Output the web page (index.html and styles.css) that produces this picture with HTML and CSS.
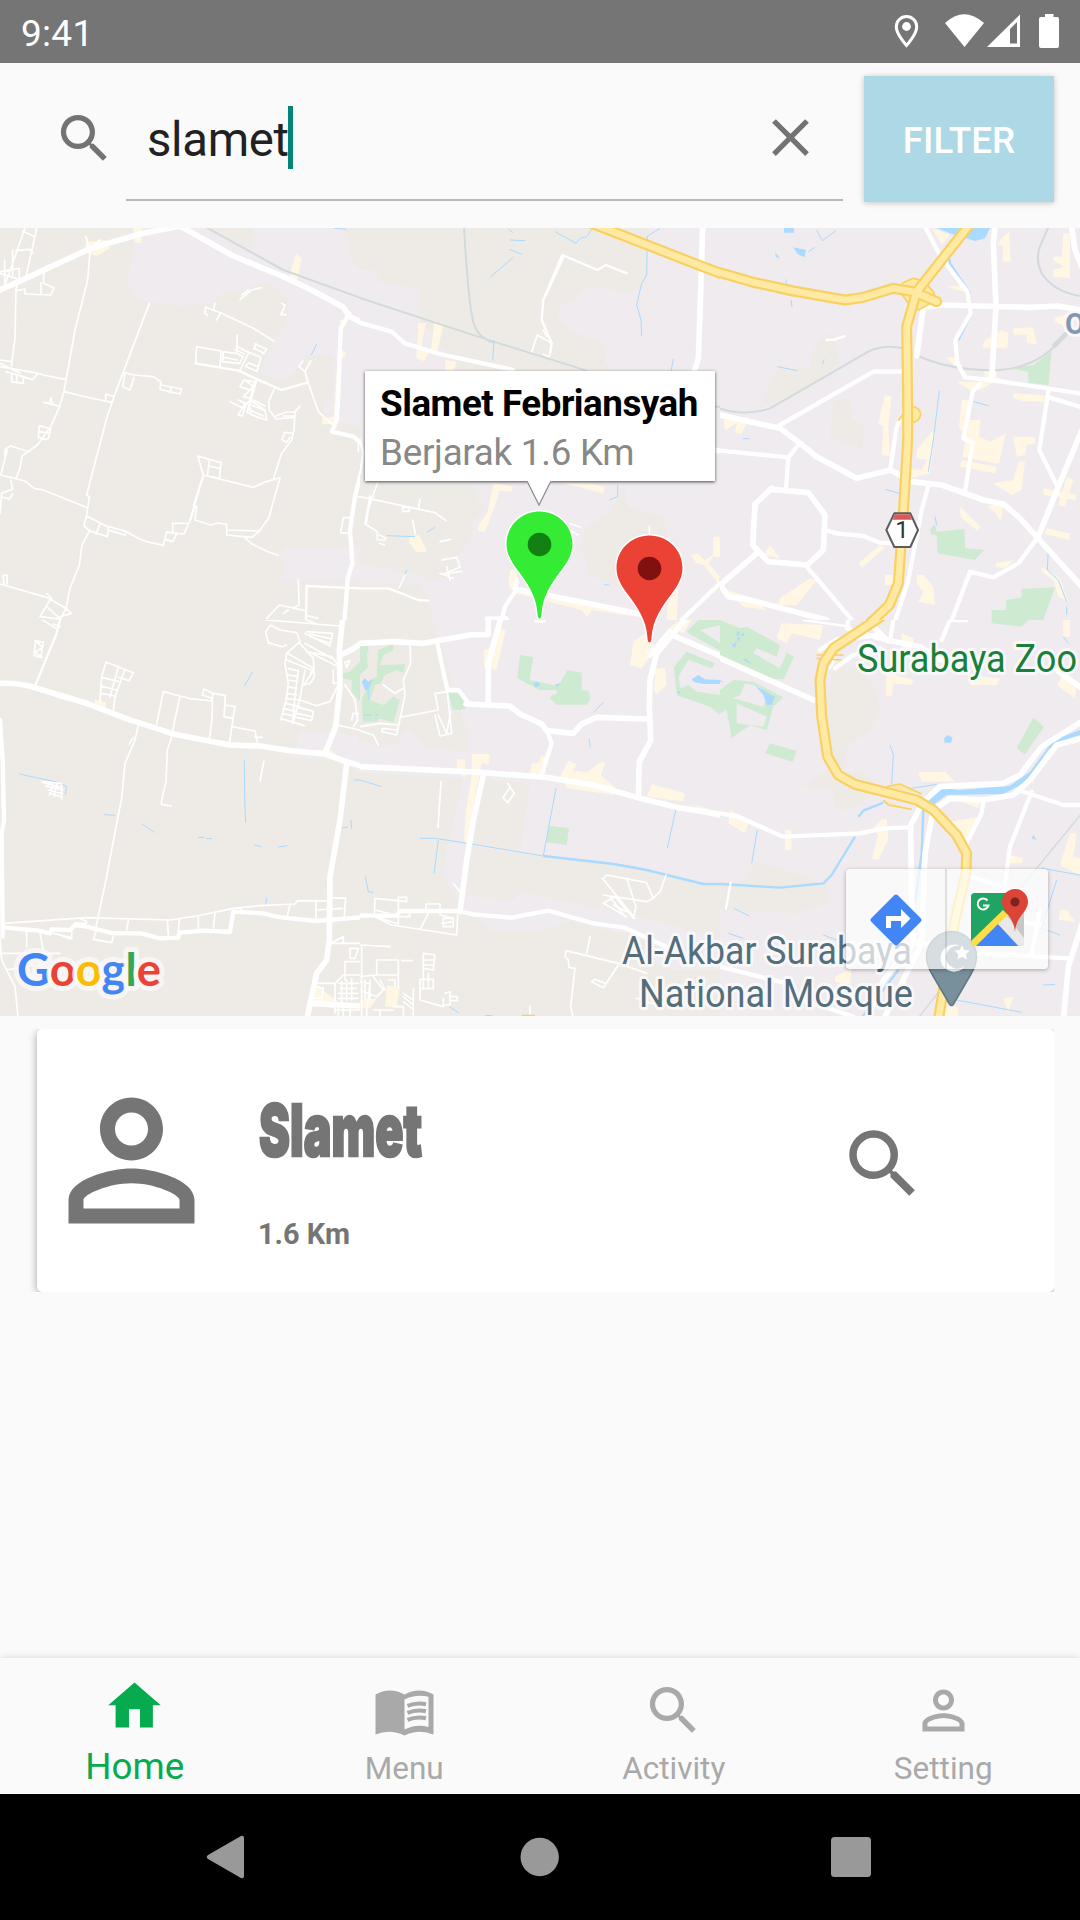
FILE: index.html
```html
<!DOCTYPE html>
<html lang="id">
<head>
<meta charset="utf-8">
<meta name="viewport" content="width=device-width">
<title>Home</title>
<link rel="stylesheet" href="styles.css">
</head>
<body>
<svg width="0" height="0" class="defs">
  <symbol id="search" viewBox="0 0 24 24"><path d="M15.5 14h-.79l-.28-.27A6.471 6.471 0 0 0 16 9.5 6.5 6.5 0 1 0 9.5 16c1.61 0 3.09-.59 4.23-1.57l.27.28v.79l5 4.99L20.490 19l-4.990-5zm-6 0C7.010 14 5 11.990 5 9.500S7.010 5 9.500 5 14 7.010 14 9.500 11.990 14 9.500 14z"/></symbol>
  <symbol id="person" viewBox="0 0 24 24"><path d="M12 5.900c1.160 0 2.100.940 2.100 2.100s-.940 2.100-2.100 2.100S9.900 9.160 9.900 8s.940-2.100 2.100-2.100m0 9c2.970 0 6.100 1.460 6.100 2.100v1.100H5.900V17c0-.640 3.130-2.100 6.100-2.100M12 4C9.790 4 8 5.790 8 8s1.790 4 4 4 4-1.790 4-4-1.790-4-4-4zm0 9c-2.670 0-8 1.340-8 4v3h16v-3c0-2.660-5.330-4-8-4z"/></symbol>
</svg>

<header class="status">
  <span class="clock">9:41</span>
  <svg class="status-icons" viewBox="890 0 190 63" width="190" height="63">
    <path d="M906.500 16.500c-5.700 0-10.200 4.500-10.200 10.200 0 7.600 10.200 18.800 10.200 18.800s10.200-11.200 10.200-18.800c0-5.700-4.500-10.200-10.200-10.200z" fill="none" stroke="#fff" stroke-width="3"/>
    <circle cx="906.500" cy="26.500" r="4.400" fill="#fff"/>
    <path d="M945 23Q964 5.500 984 23L964.500 47z" fill="#fff"/>
    <path d="M987 47L1020 14.500V47z" fill="#fff"/><path d="M1010 29l7-7v21.500h-7z" fill="#757575"/>
    <path d="M1045 14h8.500v3h3.500q2 0 2 2v27q0 2-2 2h-16q-2 0-2-2V19q0-2 2-2h4z" fill="#fff"/>
  </svg>
</header>

<section class="searchbar">
  <svg class="i-search"><use href="#search"/></svg>
  <div class="field">
    <span class="query">slamet</span><span class="caret"></span>
    <svg class="i-close" viewBox="0 0 24 24"><path d="M19 6.410L17.590 5 12 10.590 6.410 5 5 6.410 10.590 12 5 17.590 6.410 19 12 13.410 17.590 19 19 17.590 13.410 12z"/></svg>
  </div>
  <button class="filter">FILTER</button>
</section>

<main class="map">
<svg class="canvas" viewBox="0 228 1080 788" width="1080" height="788">
  <rect class="land" y="228" width="1080" height="788"/>

  <svg x="0" y="220" width="360" height="400" viewBox="0 0 1080 1200">
    <path class="urban" d="M395 0L400 80 380 190 400 230 430 243 530 256 640 250 670 215 740 210 785 185 830 205 865 245 858 300 780 455 855 490 925 405 998 405 1000 540 975 540 970 570 1010 610 1080 618V150L1050 110 1048 70 1030 20H760L752 90 600 20zM850 980H1080V1083H835L858 1045 840 1005z"/>
    <path class="shop" d="M258 66L320 60 330 85 290 108 255 95zM400 24h25v44h-20zM888 103l18 10-15 70-27-5zM1020 300l12 0-8 90 12 5-2 18-14 0-8 200h-46v-20l35-2z"/>
    <path class="rail" d="M615 20L850 150 1090 237"/>
    <path class="water" d="M950 372L934 405M1000 24L1040 28"/>
    <path class="w2" d="M75 24L15 195M110 24L78 170M68 34L104 50M48 92l40-4 10 10M0 155L58 145V178L0 160M38 90v75M14 122v70M52 185L48 210 45 355 34 440M132 160L130 190 162 203 152 225 75 222V207L50 212M123 222V188M0 420l35 5M0 430l60 30M0 440L105 458 130 465 195 478M18 455l80 24 15-18M35 460v25l35 5v-20zM50 470v18M258 50L270 95 263 180 225 330 192 514 178 562 152 620 112 675 66 708 60 745 48 775M258 95L300 60M192 514L245 528 335 547 343 530 317 522V543M132 547l48 12M148 548l5-15 5 18M152 627l-34-10-3 35 20 6 10-3 7-28zM116 635l32 5M80 693L32 678 15 688 14 708M22 690L2 765 75 783 102 805 130 810 262 863M32 780L38 808 5 820 0 880M38 822l-10 15-20-5M448 250L342 530 320 595 260 825 268 830 260 885 252 918 270 933 322 950 326 922 260 888M300 912l-12 30M270 930L246 975 238 1035 210 1105 198 1165 180 1200M326 920l54 15-5 10-45-13M380 935L420 958 440 965 490 976 500 935 530 942 518 965 495 958M500 937l52 5 20-45M518 910h43M518 910v28M375 458L368 500 390 510 402 472M375 458L402 465 460 470 482 485 480 508 540 522 545 507 484 495M514 502l-4 16M593 708L610 765 580 857 590 860 585 900 632 915 655 909 680 913V945L755 952 780 933 680 930M593 708L663 728 658 775 622 768 628 722M625 738l38 8M610 765L760 802 790 788 840 773 806 895 775 937M573 897l12-38M735 953l20 18 50 25 30 10M610 768L570 900M0 1092L140 1132 198 1165 214 1180 182 1190M12 1095l-3-28 12-2v28M150 1140L120 1190 180 1197M140 1120l15 15M143 1163l40 35M590 380L663 393 660 440M590 380L587 430M670 395l35 5M670 395l-3 30 50 5M672 412l40 8M712 345L710 400 730 410 718 430M710 378l25 14M705 388l28 14M765 372l35 16M762 384l30 16M768 370l-6 18M800 388l-12 14M735 392l48 20-12 42-35-15 10-10 25 10M745 400l-25 50M735 480l25 20-30 30 22 5 10-50-30-5-12 20 30 10M690 545l40 20 20-25 45 30 5 30-45-15-5-20M715 540l20 10-20 35 12 3 12-38M760 540l35 18M755 555l40 18M750 570l40 18M745 578l30 15M720 238L755 210 785 203M725 225l20-15M845 250l10 6-12 28h15M617 262L665 280 760 325 823 364M645 250l-5 20M617 260l-3 20 8 5M650 300l10-18M932 423L915 455 897 440 908 423M915 455L925 490 955 575 995 612M823 505L806 545 808 570 828 597 885 592M828 588l30-12h28M850 588h35M900 558L885 575 882 630 875 660 845 700 820 778M878 640l-24-3-8 22 14 8 10-15M895 1080L897 1155 880 1165M800 1195L838 1155 915 1172M850 1180l15-10M1075 670v25M1048 893L1030 893 1022 938 1045 940M1070 830h10M955 1195l-35-8"/>
    <path class="w3" d="M587 430L715 452 765 475 845 510 925 487M718 452L745 465M770 477L755 530 742 578M925 487l-70 20M1080 1105L920 1098 918 1200"/>
    <path class="w5" d="M1048 280L1022 325 1018 440 1015 520 1010 600 996 635 1062 650 1080 668M1085 750L1065 830 1050 930 1057 1030 1043 1075 1033 1210"/>
    <path class="w6" d="M-5 212L50 188 265 88 420 42 540 18 700 108 850 170 935 210 1030 262 1050 290 1085 308"/>
  </svg>

  <svg x="360" y="220" width="360" height="400" viewBox="0 0 1080 1200">
    <rect class="urban" width="1080" height="1200"/>
    <path class="land" d="M0 20H860L862 200 800 215 700 200 655 215 650 240 605 255 592 300 625 330 735 375V430L760 455H300L180 300V210L60 185 42 150H0zM0 785H330L370 870 330 920 340 950 280 1020 305 1060 220 1080 170 1065 0 1030zM0 1090H180L210 1140 215 1200H0zM790 790L805 860 910 890 930 1010 850 1130 690 1065 660 980 680 920 750 880z"/>
    <path class="shop" d="M175 308l22 2-12 65 20 25-12 25-24-12zM222 310l28 5-18 80h-20zM255 420l35 5-12 30h-22zM400 790l60 10-5 15-35-3-35 100-12 25-20-5 5-20 25-35zM148 948l30-2 20 40 0 10-30 0-20-28zM610 790h75l50 10-5 20zM450 1050l20 0 5 60 180 30 230 55-90-10-100-15-15 20-15-20-200-50-20-25zM930 1080l25 30-5 90h-30zM1060 950h20v60h-20l-15 20 35 40-5 20-45-55-20-5-18-25 22-5 20 20 25-15z"/>
    <path class="rail" d="M312 20Q325 250 340 305 350 350 400 368M0 234L370 355 680 452M1060 560h20"/>
    <path class="water" d="M445 28L460 38M450 60L495 62M450 88L485 103M390 172L460 112M585 35L648 70 660 55 680 50 695 28M860 50L900 25M862 50L860 165 845 190 830 255 843 300 845 348M402 360L398 420M940 417L933 455M773 795V830L748 840M80 947L165 950M200 937L225 922M140 1050L118 1110M733 1093l15 3"/>
    <path class="w2" d="M515 395L532 345 575 370 568 410 550 403M550 330L560 350M0 830L225 878 258 902M175 868L180 838M52 790L20 880 15 912 52 935V960M58 945l20 10M58 960h18M58 970l15 5M128 862h20v12h-20zM158 900l8 42M240 965l32-7M245 1020l45-8 10 30-50 20 55-8M260 1040l10 40M240 1060l40 15M135 1065L118 1105M630 910l30 12M625 930l30 15M868 920v25"/>
    <path class="w3" d="M800 160L738 135 712 150 607 105 550 240 545 300 575 370 570 400M612 108L555 230M0 1105H85L175 1140 205 1142M85 1105l40 15M0 660l10 40-10 60M30 830L18 910"/>
    <path class="w5" d="M0 308L95 335 135 370 240 402 300 415 460 450M1028 20L1015 415 1005 455M470 1080L465 1115 435 1160 425 1200M380 1195h60M1080 1090L965 1200"/>
    <path class="w6" d="M470 1108L660 1145 880 1190M1028 20L1022 215 1015 415 1003 455M1065 692h20"/>
    <path class="hwb" d="M695 10L905 92 1020 137 1090 163"/><path class="hw" d="M695 10L905 92 1020 137 1090 163"/>
  </svg>

  <svg x="720" y="220" width="360" height="400" viewBox="0 0 1080 1200">
    <rect class="urban" width="1080" height="1200"/>
    <path class="land" d="M170 450L270 440 280 385 330 335 350 380 358 430 240 520 120 560zM340 545L390 535 395 595 432 620 428 685 328 655z"/>
    <path class="shop" d="M635 24L690 45 665 75zM845 55l22-20 5 90h-25l3-50h-20zM1030 40h20v135l-50-5 0-20 30-10-30-20 0-10h25zM680 200l55-5 10 25zM795 360l50-30 20 10-3 45-75 0zM880 325l60-3 10 52-30-5v-25h-40zM1005 295l40-15 10 50-50-25zM495 525l20 5-10 90 5 90-25-5 5-85-15-10zM590 690l45-55 10 5-15 120-80 20-5-35 60 5 15-30-30-5zM680 412h30l15 25-20 5zM710 485h120v-35h-40l5 20 45 5-60 35h-30zM725 540h30l-5 60 32 0-5 50 35 15 45-25-20 92-110-22 10-60-20-30zM725 720l105 20-5 20-105-20zM880 520l90 5 5 20-70-2-25-10zM895 725l20 0-10 85-30 15-55-35 60-10zM880 650h65v20l-25 5-5 30-25 5zM970 805l100 20-5 15-95-15zM1040 770l20 10-25 80-20-5zM980 925l70 15-2 20-75-18zM820 855h30l-8 50-15-25-25-20zM720 860l62 60-10 12-50-40zM830 1028l55-8-30 25-30-5zM415 1030l65-55 15 8-70 60zM130 1005l20-30 30 40zM180 1135l90-60 20 5-60 75-55 0zM20 1110l70 20 50 40-70-10zM590 1065h20l30 35 5 55-50-10 15-30-20-25zM495 1065h30v30h-30zM965 1040l55 35 25 70-30-15-15-50-35-25zM10 600l80-10-25 50h-20l5-30-35 20z"/>
    <path class="green" d="M870 445L940 435 995 393 985 495 925 488 925 455zM632 925L645 914 650 935 733 927 735 985 792 990 765 1020 653 1000 650 945 632 942zM905 1107L1005 1102 970 1200H815V1170H858V1140L905 1132z"/>
    <path class="lake" d="M192 24h30v14h-30zM220 82l38 8-5 22-20-10zM165 97l15 17-12-3zM650 24H810L795 55 765 63 690 40z"/>
    <path class="water" d="M290 30L307 62 348 32M265 95L285 82M198 178L200 200M213 240L216 262M172 440L232 452M308 432L313 418M658 512L640 660 625 755M760 545L805 557M68 656h20M495 808L537 820M645 890L650 915M985 990L982 1050 1015 1080 1040 1145M1040 1160V1185"/>
    <path class="water wide" d="M680 75L690 130 750 220M755 280L715 360"/>
    <path class="rail" d="M0 565Q70 590 150 565L450 392Q500 372 550 385M595 408Q700 455 840 450 970 440 1040 335M985 22L960 80Q945 120 965 160 1000 215 1080 228"/>
    <path class="rail thick" d="M1000 380L1040 340"/>
    <path class="w3" d="M320 360L345 358 375 348"/>
    <path class="w5" d="M615 20L662 110 742 215 752 280 706 360 712 430 735 472 815 480 1080 520M980 530L1080 560M780 490L758 515 730 655 758 668 735 815M545 455H460L180 615M538 605L530 620 512 740M0 692L205 712 235 675M205 712L198 805M627 790L605 870 565 1080 520 1220M690 1215L750 1055 820 1072 895 1030 955 950M260 1040L400 1205M320 932L350 940 430 948 480 968 520 970M985 515L958 690 1010 795"/>
    <path class="w6" d="M825 20L820 70 828 260 815 480M590 408L610 262 660 255 930 262 1015 258 1080 270M1055 20L1065 90 1085 140M0 585L180 625 240 670 290 710 410 775 512 750 575 785 665 795 790 840 850 852 900 895 1090 1105M1090 620L1015 800 955 950M155 808L265 818 315 885 310 990 262 1035 145 1025 98 975 105 852 155 805M110 1000L0 1095 25 1130 90 1140 320 1200"/>
    <path class="ramp" d="M545 190L580 175 610 182 640 215 650 240 595 270 565 250 540 215M560 560Q600 555 602 585 595 610 570 608M535 602L565 560"/>
    <path class="hwb" d="M-10 155L100 187 220 213 375 240 430 232 520 205 580 215 650 245M752 10L590 215 560 320 563 560 563 660 550 880 535 1090 508 1155 450 1210"/>
    <path class="hw" d="M-10 155L100 187 220 213 375 240 430 232 520 205 580 215 650 245M752 10L590 215 560 320 563 560 563 660 550 880 535 1090 508 1155 450 1210"/>
    <path d="M499 930L523 880H571L594 930 571 981H523z" fill="#fff" stroke="#5c5c5c" stroke-width="6"/>
    <path d="M525 883H569L576 899H518z" fill="#d85b5b"/>
  </svg>

  <svg x="0" y="620" width="360" height="400" viewBox="0 0 1080 1200">
    <path class="urban" d="M900 330L1070 345 1080 380V455L1030 430 960 415H875L890 370z"/>
    <path class="green" d="M1028 160L1050 155 1080 125V245L1055 215V180L1028 175z"/>
    <path class="shop" d="M285 238l35 10-5 20-30-15zM160 222l130 32-10 10-110-30zM945 390l50 0 40 45-70-30zM945 1095l65 45-5 25-75-10zM940 1140h70v20h-80z"/>
    <path class="water" d="M758 155L733 198M58 462L85 468 180 488 200 500 195 525M733 420L734 535 737 608M313 584L345 586M427 613L463 637M594 652H612M618 656h18M763 675l22 5M835 681L862 677M800 833L797 855M1062 480h20M1020 624L1043 622M1053 600L1055 626"/>
    <path class="w2" d="M128 0L168 25M160 12l20 8M105 62l25 5-8 45-20-5 5-45 20 20-22 15 22 15M300 245L305 170 318 126 400 158 388 182 355 172M355 142L330 230M375 148L345 230 340 270M305 172l50 12M303 198l47 12M303 220l45 8M470 312L490 215 540 228 515 345M540 228L570 236 635 243 638 220 612 207 607 225 635 235M638 220L636 300 628 355M638 220L676 226 672 290 698 295 706 260 676 255M700 292L688 370M695 320L765 333 773 370M765 352h22M415 315L405 360 375 430 365 535 350 610 320 770 287 925M400 352l-12 20M515 350L502 390 498 485 485 540 484 553 514 558M792 423L780 483M125 485l60 5 0 48M130 488l55 15M138 498l50 12M145 510l42 10M150 520l36 12M160 490l-12 35M172 490l-10 40M10 910L260 893 510 900 590 888 700 865 780 857 885 852 892 842 990 843M385 902L380 930M502 900L505 945M538 898L535 935M595 890V930M645 880L640 925M725 865l-5 15M870 855L862 888M948 845V895M990 833L1037 835 1033 890M948 870l80-5M240 895l20 10-5 15M220 920l5-12 30 3M215 935v22l-27-8M160 940l50 12M290 930l-10 28 55 10 5-20M80 935V980M120 940L130 990M0 955L5 1020 20 1050 45 1100 55 1200M20 1050L100 1035M800 0L1020 18M920 0l30 12M860 75L845 80 805 68 797 35 812 15 840 30 890 38 900 65 860 100 855 130 865 190 860 235 842 300M862 100L940 145 930 165M860 120L935 150M900 70L940 115 942 150 915 190M865 145l30 8M865 165l30 5M865 180l28 5M863 200l25 5M860 220l30 5M856 235l40 5M855 250l45 10M850 265l40 10M847 280l35 8M842 295l70 22M895 150L885 230 878 310M915 150L900 235 882 300M895 262l45 12-5 28-45-10M890 280l45 10M900 240L950 257 990 245 1012 200M942 155Q948 170 930 190L910 195M915 40L990 78 998 40 920 35M930 42l62 14M930 50l60 20M915 70L995 115M920 95L995 110 1010 130M935 100L1015 140M1000 150v40h12M1050 122l-15 5 5 15zM1010 315L1080 330M1035 195L1065 240 1073 300 1060 320M1055 300l5-20h15M1030 950L990 970H1080M1030 950v20M1050 985h25l-10 30h-15zM1080 1065H1030L1005 1090H950M1035 1025h45M1035 1025V1080M1005 1090V1180M1015 1090h60M1020 1105h50M1015 1120h60M1015 1135h60M1025 1085V1150M1040 1080V1140M1055 1075V1140M1005 1170h75M1015 1160v35M1030 1160v35M1050 1160v35M950 1100l20 5-5 30h-20M180 1000H0"/>
    <path class="w3" d="M180 0L170 40 105 198"/>
    <path class="w5" d="M0 300L8 420 12 600 5 640 8 950M10 922L115 932 150 940 155 928 210 930 225 915 250 918 340 940 425 940 480 955 535 953 538 938 615 932 690 936 700 875 790 880 830 890 870 895 950 903 1080 892"/>
    <path class="w6" d="M-5 190Q60 188 105 203L260 250 385 298 470 325 520 342 690 375 780 378 870 392 975 402 1040 425 1090 440M1028 -5L1018 90 1020 200 1007 320 975 400M1018 105Q1060 90 1085 68M1040 430L1020 600 990 770 988 960 980 1020 950 1060 920 1200M945 1150L1080 1158"/>
  </svg>

  <svg x="360" y="620" width="360" height="400" viewBox="0 0 1080 1200">
    <path class="urban" d="M218 0H1080V800L820 740 550 712 335 678 320 800 310 825 460 840 480 815 700 862 900 905 1080 960V1050L930 1050 870 1020 860 950 740 930 640 900 540 935 400 935 310 870 245 765 300 520 310 475 0 455V360L60 385 110 370 150 320 200 385 320 395 325 340 300 270 240 60z"/>
    <path class="land" d="M375 478L510 490 480 695 338 675z"/>
    <path class="shop" d="M412 25l25 5-27 120-38-5V88h15zM335 402h55l-5 32-20-5-35 180-8 60-10-3 5-90 20-120zM290 418h25v55l-25-20zM820 65l50-35 15 60-40 55-35-10 5-30zM885 145h30l5 50-30 28-8-10zM545 405l15 5-5 70-45-20 5-30 20 0zM600 470l25-48 25 10-10 20 40 5 45-32 12 5-15 35 45 40-5 20-140-20zM875 492L975 520 970 545 860 530zM1000 555l80 20v20l-30-8zM960 0h35l-25 40-45-15zM80 1095l40 5-10 60-35 0zM0 1140l50-5-20 30-30 0z"/>
    <path class="green" d="M0 75H25V140L0 165zM55 90L100 72V90L70 105 60 135 135 133 130 160 110 150 75 165 70 190 45 195 30 240 70 255 100 230 120 240 100 308 60 295 50 305H8L5 240 30 180 50 170zM265 220h35l18 30v15l-20 5-20-2zM480 105L520 112 512 160 510 180 550 188 580 195 600 190 622 150 665 158V210L685 212 692 235 680 254H590L570 235 575 225 590 222V210L540 210 472 175zM567 617L627 625 620 675 558 666zM980 95L1065 130 1055 145 985 120 955 170 962 205 985 195 1010 215 1080 225V285L1050 260 950 225 942 140zM980 35L1015 0H1080V15L1020 30 1080 70V92L1000 48z"/>
    <path class="land" d="M20 100L50 85 45 140 25 160zM75 165l40-12 10 50-30 10-35-20z"/>
    <path class="lake" d="M5 185L15 175 25 185 38 178 25 210 15 210zM520 190l12-5 10 8-15 10zM585 195l14-5-5 10zM995 178L1015 165 1035 178 1080 180V192H1030L1000 185zM950 215l12-3-5 10z"/>
    <path class="water" d="M25 210V240M10 285h25M45 285h10M0 480L65 500M180 655H225L310 668 550 708 740 728 830 742M588 505L550 707M730 247L700 278M688 358L691 382M235 660L222 760M947 570L922 685M16 770L25 815 40 818M268 1160l30 20"/>
    <path class="water wide" d="M550 708L760 732 860 750 1030 792 1090 792"/>
    <path class="w2" d="M150 70L152 130 130 180 135 225 110 345 65 335 68 325 110 330M70 195L105 220 130 205M120 292L235 270 225 220 262 215 275 340 240 348 225 285M235 285l25 55 12-65M0 320L60 310 110 315M0 332L40 345 55 375M243 485L234 622M443 490l20 30-20 28-14-15 20-30M280 790L300 815M43 880L45 835 140 845V832H115V912L45 890 95 915 290 945 293 885M45 870L85 880M115 890h35l-2-15M198 865V852H240V880M205 880L180 928M240 885l40 10M250 895h30v25h-30zM245 910l35-5M730 775L740 765 860 788 880 835 860 845 730 825M727 775L825 895M800 775L828 860 820 895 765 830 730 850 800 890M750 830l45 60M760 855l40 20M900 815L918 765M880 835L900 815M690 950L680 1000M860 1060L775 1030 618 992 615 1010 625 1020 627 1042 645 1045 632 1160 640 1195M775 1035L730 1103 695 1085 705 1078 735 1090M0 975L90 980M5 980V1200M50 1020H115V1100M50 1020V1065L0 1070M50 1065H110M0 1085l30 5-10 80M15 1080v60M30 1080v60M40 1070l30 40-20 20M0 1110l50 20M60 1080l15 30M85 1080h20v20M130 1120l30 20M130 1130l30 25M130 1145l25 20M190 1000l35 5-5 45-30-5zM192 1020h30M192 1035h30M180 1078h40v28h-40zM180 1080V1140L250 1160M190 1050v55M205 1060v45M255 1120l15-5v40h-20v-20M270 1130h22v12h-22M125 1022h32M160 1105v95M510 1158v30M100 1160h30v35M20 1160v40M40 1170h60M60 1170v30M830 1135l60 20"/>
    <path class="w5" d="M0 887H110L120 873H295L340 883 455 893 565 872 700 910 790 922 920 980M232 70L262 210 295 210 322 245M560 330L575 370 548 455"/>
    <path class="w6" d="M0 70L100 65 190 70 330 45 385 43V0M422 -5L385 130V250M318 252L450 258 480 282 545 312 560 332 640 340 665 312 710 292 865 297M0 440L360 457 560 472 700 495 840 535 950 562 1090 585M370 465L340 600 320 720 300 875M835 530L838 425 872 362 868 260 870 180 890 100 975 0M925 40L1090 112M870 105L930 35M530 0h20"/>
    <path class="lake" d="M375 1185h22v5h-22z"/><path d="M485 1184h40v6h-40z" fill="#f8d162"/>
  </svg>

  <svg x="720" y="620" width="360" height="400" viewBox="0 0 1080 1200">
    <rect class="urban" width="1080" height="1200"/>
    <path class="land" d="M340 130L420 150 465 200 483 268 450 330 380 380 375 455 430 455 485 510 380 570 345 560 340 510 245 500 335 440 310 300zM0 800L75 780 110 725 180 745 325 795 320 850 230 880 0 870z"/>
    <path class="shop" d="M185 10l125 5-10 45-85-20-15 30-30-15zM545 40l35 15-5 50-30-20zM500 160l80 20-5 15-55-5-5 40-18-5zM755 165l85 10-10 20-80 0zM1025 170l45 25-5 40-55-40zM1030 0h20v50h-20zM30 570l60 30-15 40-50-30zM195 630h20v60h-20zM485 598h15l5 60-30 62-20-5 20-70-15-20zM595 455h80l30 30h-100zM725 545h55l-5 20zM695 605l80-15-35 75zM1050 640h20l-10 70 20 5v50l-60-30zM875 705l35 10-5 15-40 0zM865 1180l-15-45 30-5zM345 1070l50-25-5 50-45-10zM665 1160h50v30h-50zM1020 870h20l25 35-50-5z"/>
    <path class="green" d="M0 0L60 25 80 20 180 75 170 110 110 85 100 100 180 145 200 98 222 110 190 178 130 175 70 140 0 110zM0 210L40 180 100 185 190 232 160 260 140 330 90 315 35 355 20 270 0 280zM150 370L230 393 218 425 135 400zM940 293L972 320 915 403 890 385zM815 0h110l-20 20-90-10z"/>
    <path class="urban" d="M40 235L60 225 75 190 120 200 140 235 130 260zM50 250L140 290 130 320 50 310z"/>
    <path class="lake" d="M105 195L145 220 165 230 155 255 140 255 130 225zM35 75l15-10-5 20zM68 120l8-5 20 18zM50 35h8v12h-8zM65 40h8v8h-8zM52 52h8v10h-8zM673 355l10-10 15 8-5 15-20 0zM935 655l5-10 10 15zM1080 330L1000 360 930 455 870 497 720 510 670 505 620 540 640 555 680 525 850 522 920 485 985 390 1020 365 1080 345z"/>
    <path class="water" d="M0 182l8 4M510 375L520 405 515 492M575 505L650 493M112 630L95 730M42 865L88 888M310 945L350 960M25 940L70 955M710 1140L905 1177M970 1095L1005 1093M965 745L1080 765M1010 780L965 925 1020 945M1030 50l15 20"/>
    <path class="water wide" d="M0 792L180 803 310 790 335 765 405 650M415 590L430 572 490 548M610 570L605 700 585 850M535 1050L420 1200"/>
    <path class="rail slim" d="M1085 580L950 745 840 880 590 1200"/>
    <path class="w3" d="M32 788L18 865M250 0L390 20M330 145l15-30"/>
    <path class="w5" d="M385 0L380 25 510 65M520 0L510 65M690 0L665 60M300 90L345 60 480 45M740 0L690 0M345 145L400 105 480 85M790 540L785 580 740 670M935 515L870 680 850 830M750 770L850 800M895 510L1030 555 1080 555M0 580L55 590 110 615 190 650 420 640 490 625 570 622M780 1000L1045 1015M0 1040L200 1090M960 870L935 1000M250 1140L400 1190M580 970h50M900 905l60 10"/>
    <path class="w6" d="M-5 112L280 240M440 0L500 60 600 80 660 120M1010 150L1085 205M1085 305L965 380 900 465 850 490 660 500 610 545 572 615 575 850 580 970 490 1080 440 1200M1085 355L1010 375 930 480 880 525 790 540 690 535 640 570 615 700 605 970 530 1120 490 1200M1090 900L1045 1040 1030 1200"/>
    <path class="ramp" d="M290 105h80M290 115l75 5M500 500L540 492 605 522M490 540L505 555 575 568"/>
    <path class="hwb" d="M490 -15L340 85 310 130 300 180 305 290 323 410 355 465 405 493 590 540 640 570 710 645 740 700 738 760 705 900 655 1200"/>
    <path class="hw" d="M490 -15L340 85 310 130 300 180 305 290 323 410 355 465 405 493 590 540 640 570 710 645 740 700 738 760 705 900 655 1200"/>
  </svg>

  <text class="shield" x="902" y="538" text-anchor="middle">1</text>
  <text class="label station" x="1065" y="334">O</text>
  <text class="label zoo" x="857" y="672" textLength="220" lengthAdjust="spacingAndGlyphs">Surabaya Zoo</text>
  <text class="label mosque" x="622" y="963.500" textLength="290" lengthAdjust="spacingAndGlyphs">Al-Akbar Surabaya</text>
  <text class="label mosque" x="639" y="1006.500" textLength="274" lengthAdjust="spacingAndGlyphs">National Mosque</text>
  <path d="M952 931.500a25.500 25.500 0 0 0-25.500 25.500c0 7 3 13 6 18l17 29q2 3 4 0l17-29c3-5 6-11 6-18a25.500 25.500 0 0 0-24.500-25.500z" fill="#78909c" stroke="#5d7783" stroke-width="1.500"/>
  <path d="M960 946a13.500 13.500 0 1 0 5 20 11.500 11.500 0 1 1-5-20z" fill="#fff"/>
  <path d="M962 945l2.200 5 5.500.5-4 3.700 1.200 5.300-4.900-2.700-4.700 2.700 1.200-5.300-4.200-3.700 5.500-.5z" fill="#fff"/>

  <path class="pin" fill="#34ec34" d="M539.500 511.500c-18.500 0-33 14.500-33 32.500 0 10 5 18 11 26 9 12 19 25 20 44 .3 6 3.700 6 4 0 1-19 11-32 20-44 6-8 11-16 11-26 0-18-14.500-32.500-33-32.500z"/>
  <circle cx="539.500" cy="544.500" r="11.800" fill="#128012"/>
  <path class="pin" fill="#ea4335" d="M649.500 535.500c-18.500 0-33 14.500-33 32.500 0 10 5 18 11 26 9 12 19 25 20 44 .3 6 3.700 6 4 0 1-19 11-32 20-44 6-8 11-16 11-26 0-18-14.500-32.500-33-32.500z"/>
  <circle cx="649.500" cy="568.500" r="11.800" fill="#80110f"/>

  <text class="google" x="17" y="985.500" textLength="144" lengthAdjust="spacingAndGlyphs"><tspan fill="#4285f4">G</tspan><tspan fill="#ea4335">o</tspan><tspan fill="#fbbc05">o</tspan><tspan fill="#4285f4">g</tspan><tspan fill="#34a853">l</tspan><tspan fill="#ea4335">e</tspan></text>
</svg>

<div class="info">
  <strong>Slamet Febriansyah</strong>
  <span>Berjarak 1.6 Km</span>
  <svg class="tip" viewBox="0 0 26 26" width="26" height="26"><path d="M0 0H26L13 25z" fill="#fff"/><path d="M1 1L13 25 25 1" fill="none" stroke="#8d8a8d" stroke-width="1.200"/></svg>
</div>

<div class="toolbar">
  <div class="tool"><svg viewBox="0 0 52 52" width="52" height="52"><path d="M24 1.500q2-2 4 0L50.500 24q2 2 0 4L28 50.500q-2 2-4 0L1.500 28q-2-2 0-4z" fill="#4285f4"/><path d="M16 34V22h15v-7l9.500 9.500L31 34v-7H21v7z" fill="#fff"/></svg></div>
  <div class="tool"><svg viewBox="0 0 58 60" width="58" height="60">
    <rect y="6" width="53" height="53" rx="4" fill="#c8c8c8"/>
    <path d="M4 6H38V26L0 55V10q0-4 4-4z" fill="#1fa463"/>
    <path d="M32 23L38 29 5 59H3q-3-1-3-5z" fill="#ffdd48"/>
    <path d="M5 59L27 37 47 59z" fill="#4285f4"/>
    <path d="M27 37L36 29 53 51v5q-1 3-5 3z" fill="#e9e9ea"/>
    <path d="M16.500 13.500a5.500 5.500 0 1 0 1 5H12" fill="none" stroke="#fff" stroke-width="2"/>
    <path d="M44 2a13 13 0 0 0-13 13c0 10 12 14 13 30 1-16 13-20 13-30A13 13 0 0 0 44 2z" fill="#db4437"/>
    <circle cx="44" cy="15" r="4.500" fill="#7b231c"/></svg></div>
</div>
</main>

<section class="results">
  <div class="clip"><article class="card">
    <svg class="avatar"><use href="#person"/></svg>
    <div class="who">
      <svg class="name" viewBox="0 0 180 90" width="180" height="90"><text x="1" y="70" textLength="163" lengthAdjust="spacingAndGlyphs">Slamet</text></svg>
      <span class="dist">1.6 Km</span>
    </div>
    <svg class="go"><use href="#search"/></svg>
  </article></div>
</section>

<nav class="tabs">
  <a class="tab active"><svg viewBox="0 0 24 24"><path d="M9.900 20v-7h4.200v7h4.900v-8.500h3L12 2.900 2 11.500h2.800V20z"/></svg><span>Home</span></a>
  <a class="tab"><svg viewBox="0 0 63 63"><path d="M2.500 15.500Q17 7.500 31.500 15.500 46 7.500 60.500 15.500V55.500Q46 49.500 31.500 56.500 17 49.500 2.500 55.500zM31.500 20.500V50.500Q43 44.500 55.500 48V17.800Q43 15 31.500 20.500z"/><path d="M34.500 26.800q9-3.700 18.500-1.600M34.500 33.800q9-3.700 18.500-1.600M34.500 40.800q9-3.700 18.500-1.600" fill="none" stroke="#a9a9a9" stroke-width="4"/></svg><span>Menu</span></a>
  <a class="tab"><svg><use href="#search"/></svg><span>Activity</span></a>
  <a class="tab"><svg><use href="#person"/></svg><span>Setting</span></a>
</nav>

<footer class="sysnav">
  <svg viewBox="0 0 40 44" width="40" height="44"><path d="M35 1q3-1 3 2v38q0 3-3 2L2 24q-2.500-2 0-4z"/></svg>
  <svg viewBox="0 0 40 40" width="40" height="40"><circle cx="20.700" cy="20" r="19.200"/></svg>
  <svg viewBox="0 0 40 40" width="40" height="40"><rect width="40" height="40" rx="3.500"/></svg>
</footer>
</body>
</html>
```
FILE: styles.css
```css
* { box-sizing: border-box; }
body { margin: 0; width: 1080px; height: 1920px; display: flex; flex-direction: column; background: #fafafa; font-family: Roboto, sans-serif; overflow: hidden; }
.defs { display: block; height: 0; flex: none; position: absolute; }

.status { height: 63px; flex: none; background: #757575; color: #fff; display: flex; align-items: center; justify-content: space-between; padding-left: 21px; }
.clock { font-size: 37px; line-height: 43px; padding-top: 3px; letter-spacing: .3px; }

.searchbar { height: 165px; flex: none; display: flex; align-items: flex-start; padding: 13px 26px 0 53px; }
.i-search { width: 63px; height: 63px; margin-top: 31px; fill: #737373; }
.field { width: 717px; height: 125px; margin-left: 10px; padding: 0 21px; border-bottom: 2px solid #b8b8b8; display: flex; align-items: center; }
.query { font-size: 47.25px; letter-spacing: -.3px; color: #212121; line-height: 56px; padding-top: 5px; }
.caret { width: 5px; height: 63px; background: #008577; margin-left: -1px; }
.i-close { width: 63px; height: 63px; margin-left: auto; fill: #737373; }
.filter { width: 190px; height: 126px; margin-left: 21px; border: 0; background: #add8e6; color: #fff; font: 500 36.75px/43px Roboto, sans-serif; padding: 2px 0 0; box-shadow: 0 1px 6px rgba(0,0,0,.22); }

.map { position: relative; height: 788px; flex: none; overflow: hidden; }
.canvas { display: block; }
.land { fill: #eeebe6; }
.urban { fill: #efebef; }
.shop { fill: #fff6e4; }
.green { fill: #ceead0; }
.lake { fill: #aadaff; }
.canvas path { stroke-linejoin: round; }
.water, .rail, .w2, .w3, .w5, .w6, .hw, .hwb, .ramp { fill: none; }
.water { stroke: #aadaff; stroke-width: 3; }
.wide { stroke-width: 7; }
.rail { stroke: #d3dadc; stroke-width: 6; }
.thick { stroke-width: 14; }
.slim { stroke-width: 4; }
.w2, .w3, .w5, .w6 { stroke: #fff; stroke-linecap: round; }
.w2 { stroke-width: 5; }
.w3 { stroke-width: 7; }
.w5 { stroke-width: 13; }
.w6 { stroke-width: 17; }
.ramp { fill: #ffe9a3; stroke: #f8d162; stroke-width: 5; }
.hwb { stroke: #f8d162; stroke-width: 33; stroke-linecap: round; }
.hw { stroke: #ffe9a3; stroke-width: 20; stroke-linecap: round; }
.shield { font-size: 24px; fill: #333; }
.label { font-size: 38.5px; stroke: rgba(250,250,252,.9); stroke-width: 6px; paint-order: stroke; stroke-linejoin: round; }
.station { font-size: 29px; font-weight: 700; fill: #8697b0; }
.zoo { fill: #188038; }
.mosque { fill: #546e7a; }
.pin { stroke: #fff; stroke-width: 3px; paint-order: stroke; }
.google { font-family: Lato, sans-serif; font-weight: 700; font-size: 46px; stroke: rgba(250,250,250,.8); stroke-width: 10px; paint-order: stroke; stroke-linejoin: round; }

.info { position: absolute; left: 365px; top: 143px; width: 350px; height: 110px; background: #fff; box-shadow: 0 1px 3px rgba(0,0,0,.7); display: flex; flex-direction: column; padding: 10px 0 0 15px; white-space: nowrap; font-size: 36.75px; line-height: 45px; }
.info strong { letter-spacing: -.47px; color: #000; font-weight: 700; }
.info span { color: #888; margin-top: 4px; letter-spacing: -.25px; }
.tip { position: absolute; left: 161px; top: 109px; }

.toolbar { position: absolute; left: 846px; top: 641px; width: 202px; height: 100px; border-radius: 4px; background: rgba(255,255,255,.7); box-shadow: 0 1px 4px rgba(0,0,0,.3); display: flex; }
.tool { flex: 1; display: flex; align-items: center; justify-content: center; padding: 2px 0 0 2px; }
.tool + .tool { border-left: 2px solid rgba(0,0,0,.1); padding: 0 0 5px 5px; }

.results { flex: 1; padding: 13px 0 0; }
.clip { overflow: hidden; padding: 0 26px 0 26px; width: 1054px; height: 263px; }
.card { width: 1017px; height: 263px; margin-left: 11px; background: #fff; border-radius: 5px; box-shadow: 0 2px 8px rgba(0,0,0,.35); display: flex; align-items: center; }
.avatar { width: 189px; height: 189px; fill: #757575; }
.who { display: flex; flex-direction: column; margin-left: 32px; width: 580px; align-self: flex-start; padding-top: 57px; }
.name { display: block; }
.name text { font-family: Inter, sans-serif; font-weight: 900; font-size: 72px; fill: #757575; stroke: #757575; stroke-width: 2.5px; }
.dist { font-size: 28.9px; font-weight: 700; color: #757575; line-height: 34px; margin-top: 41px; }
.go { width: 90px; height: 90px; fill: #757575; margin-top: 6px; }

.tabs { height: 136px; flex: none; display: flex; padding-right: 2px; box-shadow: 0 -1px 6px rgba(0,0,0,.12); background: #fafafa; }
.tab { flex: 1; display: flex; flex-direction: column; align-items: center; padding-top: 21px; fill: #a9a9a9; color: #a9a9a9; font-size: 31.5px; line-height: 36px; }
.tab svg { width: 63px; height: 63px; flex: none; }
.tab span { margin-top: 9px; }
.tab.active { fill: #06ab4f; color: #06ab4f; font-size: 36.75px; padding-top: 17px; }
.tab.active span { margin-top: 11px; }

.sysnav { height: 126px; flex: none; background: #000; fill: #999; display: flex; align-items: center; justify-content: space-between; padding: 0 209px 0 206px; }
```
